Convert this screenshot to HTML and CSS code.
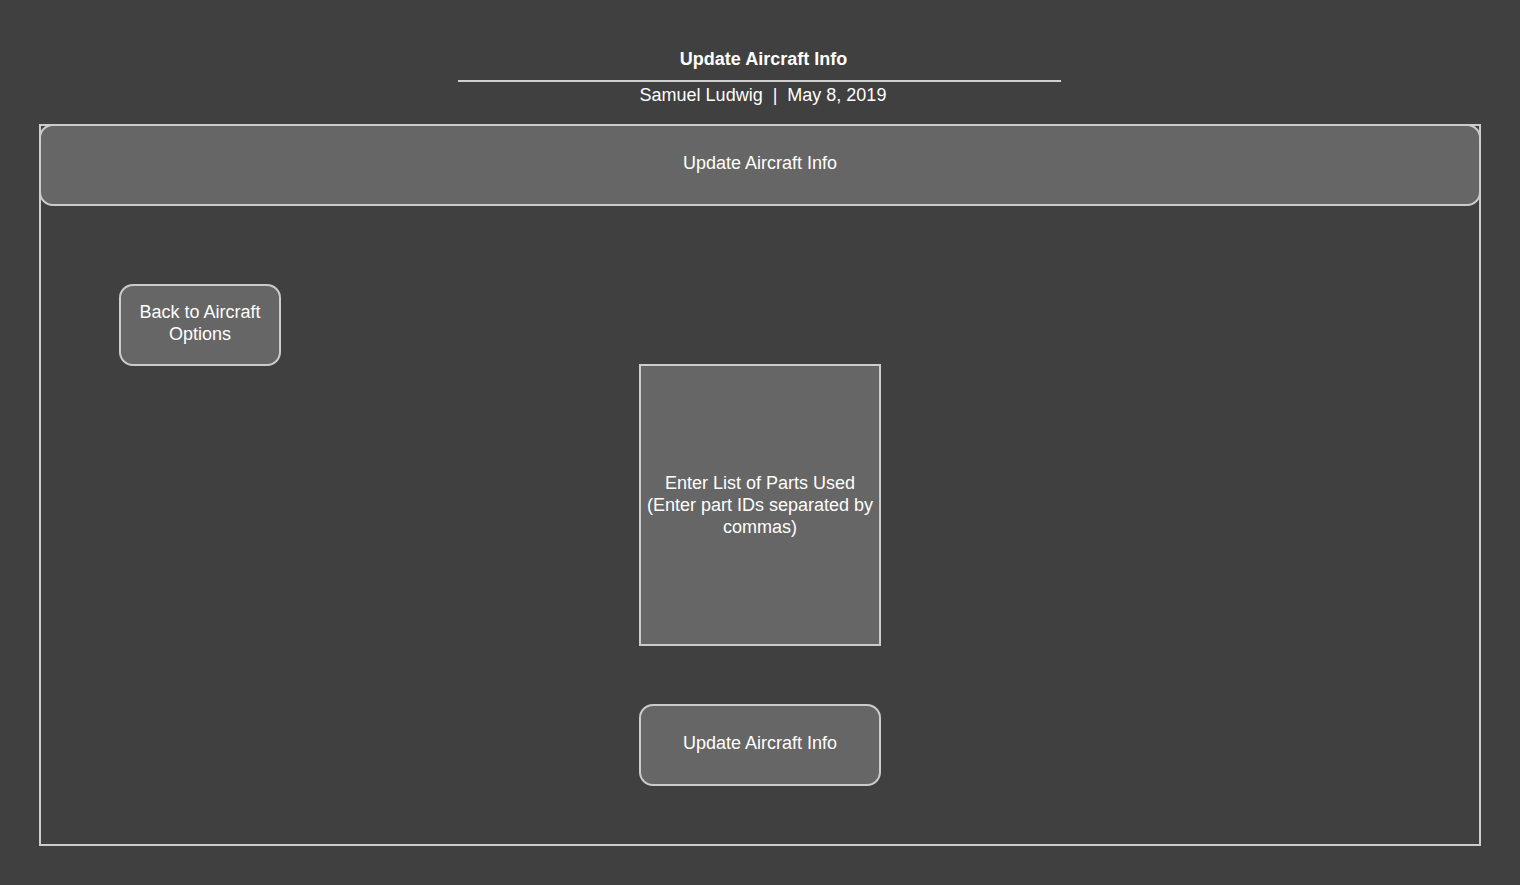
FILE: index.html
```html
<!DOCTYPE html>
<html lang="en">
<head>
<meta charset="utf-8">
<title>Update Aircraft Info</title>
<link rel="stylesheet" href="styles.css">
</head>
<body>
<header class="doc-header">
  <h1 class="doc-title">Update Aircraft Info</h1>
  <hr class="doc-rule">
  <p class="doc-meta">Samuel Ludwig &nbsp;|&nbsp; May 8, 2019</p>
</header>
<main class="frame">
  <div class="title-bar">Update Aircraft Info</div>
  <div class="frame-body">
    <div class="back-row">
      <button class="btn btn-back" type="button">Back to Aircraft Options</button>
    </div>
    <div class="center-col">
      <div class="parts-box">Enter List of Parts Used (Enter part IDs separated by commas)</div>
      <button class="btn btn-update" type="button">Update Aircraft Info</button>
    </div>
  </div>
</main>
</body>
</html>
```
FILE: styles.css
```css
* { box-sizing: border-box; }
html, body { margin: 0; }
body {
  background: #404040;
  color: #ffffff;
  font-family: "Liberation Sans", Arial, sans-serif;
  font-size: 18px;
  padding-top: 49px;
  min-height: 885px;
}
.doc-header {
  display: flex;
  flex-direction: column;
  align-items: center;
}
.doc-title {
  margin: 0;
  padding-left: 7px;
  font-size: 18px;
  font-weight: bold;
  line-height: 20px;
}
.doc-rule {
  width: 603px;
  height: 2px;
  margin: 11px 0 0 -1px;
  border: 0;
  background: #d0d0d0;
}
.doc-meta {
  margin: 3px 0 0;
  padding-left: 6px;
  line-height: 20px;
}
.frame {
  margin: 19px 39px 0;
  height: 722px;
  border: 2px solid #cccccc;
  display: flex;
  flex-direction: column;
}
.title-bar {
  margin: -2px -2px 0;
  height: 82px;
  border: 2px solid #cccccc;
  border-radius: 14px;
  background: #666666;
  display: flex;
  align-items: center;
  justify-content: center;
  line-height: 20px;
  padding-bottom: 4px;
}
.frame-body {
  display: flex;
  flex-direction: column;
}
.back-row {
  padding: 78px 0 0 78px;
}
.btn {
  font: inherit;
  color: #ffffff;
  background: #666666;
  border: 2px solid #cccccc;
  border-radius: 14px;
  line-height: 22px;
  padding: 0 10px 4px;
  cursor: pointer;
}
.btn-back {
  width: 162px;
  height: 82px;
}
.center-col {
  margin-top: -2px;
  display: flex;
  flex-direction: column;
  align-items: center;
}
.parts-box {
  width: 242px;
  height: 282px;
  background: #666666;
  border: 2px solid #cccccc;
  display: flex;
  align-items: center;
  justify-content: center;
  text-align: center;
  line-height: 22px;
  padding: 0 4px;
}
.btn-update {
  margin-top: 58px;
  width: 242px;
  height: 82px;
}
```
